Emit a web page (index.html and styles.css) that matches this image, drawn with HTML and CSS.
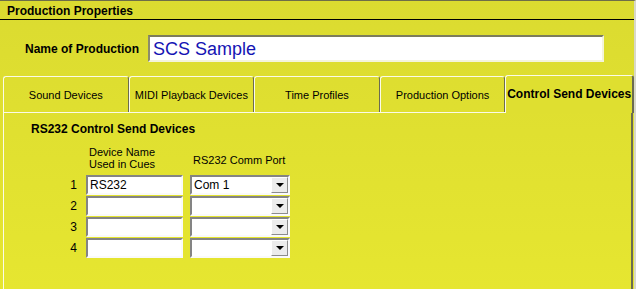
FILE: index.html
```html
<!DOCTYPE html>
<html lang="en">
<head>
  <meta charset="UTF-8" />
  <title>Production Properties</title>
  <link rel="stylesheet" href="styles.css">
</head>
<body>

  <div class="window">
    <!-- Title bar -->
    <div class="title-bar">Production Properties</div>

    <!-- Name of production -->
    <div class="name-row">
      <label class="name-label" for="prod-name">Name of Production</label>
      <div class="name-box" id="prod-name">SCS Sample</div>
    </div>

    <!-- Tabs -->
    <div class="tabs">
      <div class="tab">Sound Devices</div>
      <div class="tab">MIDI Playback Devices</div>
      <div class="tab">Time Profiles</div>
      <div class="tab">Production Options</div>
      <div class="tab active">Control Send Devices</div>
    </div>

    <!-- Tab panel -->
    <div class="panel">
      <h2 class="panel-title">RS232 Control Send Devices</h2>

      <div class="device-grid">
        <div></div>
        <div class="col-head">Device Name<br>Used in Cues</div>
        <div class="col-head port-head">RS232 Comm Port</div>

        <div class="row-num">1</div>
        <div class="field">RS232</div>
        <div class="combo"><span class="combo-text">Com 1</span><span class="combo-btn"></span></div>

        <div class="row-num">2</div>
        <div class="field"></div>
        <div class="combo"><span class="combo-text"></span><span class="combo-btn"></span></div>

        <div class="row-num">3</div>
        <div class="field"></div>
        <div class="combo"><span class="combo-text"></span><span class="combo-btn"></span></div>

        <div class="row-num">4</div>
        <div class="field"></div>
        <div class="combo"><span class="combo-text"></span><span class="combo-btn"></span></div>
      </div>
    </div>
  </div>

</body>
</html>
```

FILE: styles.css
```css
/* Basic reset */
body {
  margin: 0;
  font-family: "Liberation Sans", Arial, sans-serif;
  font-size: 11px;
  color: #000;
  background-color: #e2e230;
}

/* Whole dialog */
.window {
  width: 634px;
  height: 288px;
  overflow: hidden;
  border-top: 1px solid #6e6e48;
  border-right: 2px solid #d8d8c8;
  background: linear-gradient(#dbdb30, #e6e630);
  display: flex;
  flex-direction: column;
}

/* Title bar */
.title-bar {
  height: 18px;
  line-height: 20px;
  padding-left: 7px;
  font-size: 12px;
  font-weight: bold;
  border-bottom: 1px solid #000;
}

/* Name of production row */
.name-row {
  display: flex;
  align-items: center;
  margin-top: 15px;
}
.name-label {
  width: 139px;
  text-align: right;
  font-size: 12px;
  font-weight: bold;
  padding-right: 9px;
}
.name-box {
  width: 446px;
  height: 23px;
  padding: 0 3px;
  line-height: 24px;
  font-size: 18px;
  color: #1414b4;
  background: #fff;
  border: 2px solid;
  border-color: #7c7c5c #f4f4dc #f4f4dc #8c8c6c;
}

/* Tab strip */
.tabs {
  display: flex;
  align-items: flex-end;
  height: 37px;
  margin-top: 13px;
  padding-left: 3px;
}
.tab {
  width: 124px;
  height: 35px;
  line-height: 36px;
  text-align: center;
  border: 1px solid;
  border-bottom: none;
  border-color: #fbfbe8 #6c6c50 transparent #fbfbe8;
  border-radius: 3px 3px 0 0;
}
.tab.active {
  position: relative;
  width: 126px;
  height: 37px;
  margin-bottom: -1px;
  line-height: 37px;
  font-size: 12px;
  font-weight: bold;
  background: #dfdf30;
  border-right: 2px solid #6c6c50;
}

/* Panel under the tabs */
.panel {
  flex: 1;
  margin-left: 3px;
  margin-right: 1px;
  padding: 9px 0 0 27px;
  border-top: 1px solid #fbfbe8;
  border-left: 1px solid #fbfbe8;
  border-right: 2px solid #6c6c50;
}
.panel-title {
  margin: 0;
  font-size: 12px;
  line-height: 14px;
}

/* Device grid */
.device-grid {
  display: grid;
  grid-template-columns: 30px 97px 107px;
  row-gap: 1px;
  margin: 10px 0 0 25px;
}
.col-head {
  line-height: 12px;
  padding-left: 3px;
  margin-bottom: 4px;
  align-self: center;
}
.port-head {
  margin-left: 7px;
  padding-top: 3px;
}
.row-num {
  text-align: right;
  padding-right: 9px;
  line-height: 20px;
  font-size: 12px;
}
.field, .combo {
  height: 16px;
  line-height: 16px;
  padding-left: 2px;
  background: #fff;
  border: 2px solid;
  border-color: #848484 #fafafa #fafafa #848484;
  font-size: 12px;
}
.combo {
  display: flex;
  margin-left: 7px;
  padding-left: 1px;
}
.combo-text {
  flex: 1;
  padding-left: 1px;
}
.combo-btn {
  width: 15px;
  height: 14px;
  background: #ececec;
  border: 1px solid;
  border-color: #fff #8c8c8c #8c8c8c #fff;
  display: flex;
  align-items: center;
  justify-content: center;
}
.combo-btn::after {
  content: "";
  border-top: 4px solid #000;
  border-left: 4px solid transparent;
  border-right: 4px solid transparent;
}
```
